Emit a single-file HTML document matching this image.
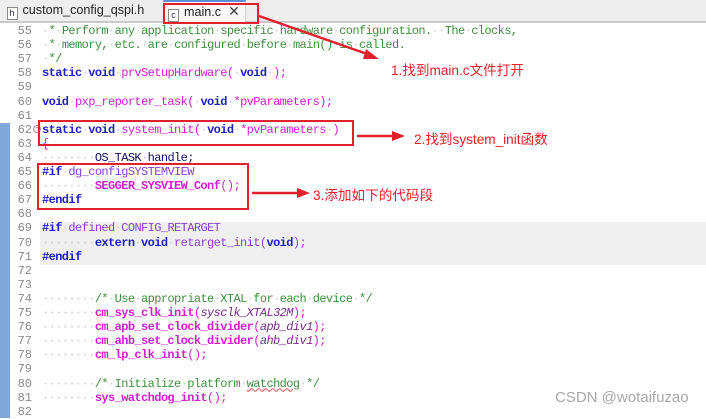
<!DOCTYPE html>
<html><head><meta charset="utf-8"><style>
*{margin:0;padding:0;box-sizing:border-box}
body{width:706px;height:418px;overflow:hidden;background:#fff;position:relative;font-family:"Liberation Mono",monospace;font-size:12px;letter-spacing:-0.6px}
.tabbar{position:absolute;left:0;top:0;width:706px;height:23px;background:#eeeeee;border-bottom:2px solid #c9c9c9}
.tab{position:absolute;top:0;height:21px;font-family:"Liberation Sans",sans-serif;font-size:12.6px;color:#222;line-height:21px;letter-spacing:0}
.ic{display:inline-block;width:11px;height:13px;border:1px solid #8a8a8a;background:#fff;font-size:9px;line-height:11px;text-align:center;vertical-align:-2px;margin-right:5px;color:#335;font-family:"Liberation Sans",sans-serif}
.gut{position:absolute;left:0;top:123px;width:10px;height:295px;background:#7fa7d8}
.ln{position:absolute;left:10px;width:22px;text-align:right;color:#8a8a8a;font-size:12px;height:14px;line-height:14px;letter-spacing:0}
.cd{position:absolute;left:42px;white-space:pre;height:14px;line-height:14px}
.d{color:#ccc}
.c{color:#3f8f3f}
.k{color:#2020c8;font-weight:bold}
.f{color:#d020d0}
.fb{color:#d020d0;font-weight:bold}
.p{color:#8a3fd0}
.b{color:#101060}
.box{position:absolute;border:2px solid #e0202a}
.lab{position:absolute;color:#e8202a;font-family:"Liberation Sans","Noto Sans CJK SC",sans-serif;font-size:13.6px;white-space:nowrap;letter-spacing:0}
</style></head><body>
<div class="tabbar"></div>
<div class="tab" style="left:3px;width:158px">&nbsp;<span class="ic">h</span>custom_config_qspi.h</div>
<div style="position:absolute;left:163px;top:0;width:83px;height:22px;background:#f7f7f7;border-top:2px solid #5b8fd6;border-right:1px solid #cfcfcf;border-left:1px solid #cfcfcf"></div>
<div class="tab" style="left:168px;top:1px"><span class="ic">c</span>main.c&nbsp;&nbsp;<span style="font-size:14px;color:#444">✕</span></div>
<div class="gut"></div>
<div style="position:absolute;left:40px;top:222px;width:666px;height:43px;background:#efefef"></div>
<div style="position:absolute;left:33px;top:125px;width:8px;height:8px;border:1px solid #999;border-radius:50%;font-size:7px;line-height:6px;text-align:center;color:#666;background:#eee">−</div>

<div id="code"></div>
<script>
var L=[
[55,'<span class="c"><span class="d">·</span>*<span class="d">·</span>Perform<span class="d">·</span>any<span class="d">·</span>application<span class="d">·</span>specific<span class="d">·</span>hardware<span class="d">·</span>configuration.<span class="d">··</span>The<span class="d">·</span>clocks,</span>'],
[56,'<span class="c"><span class="d">·</span>*<span class="d">·</span>memory,<span class="d">·</span>etc.<span class="d">·</span>are<span class="d">·</span>configured<span class="d">·</span>before<span class="d">·</span>main()<span class="d">·</span>is<span class="d">·</span>called.</span>'],
[57,'<span class="c"><span class="d">·</span>*/</span>'],
[58,'<span class="k">static</span><span class="d">·</span><span class="k">void</span><span class="d">·</span><span class="f">prvSetupHardware(</span><span class="d">·</span><span class="k">void</span><span class="d">·</span><span class="f">);</span>'],
[59,''],
[60,'<span class="k">void</span><span class="d">·</span><span class="f">pxp_reporter_task(</span><span class="d">·</span><span class="k">void</span><span class="d">·</span><span class="f">*pvParameters);</span>'],
[61,''],
[62,'<span class="k">static</span><span class="d">·</span><span class="k">void</span><span class="d">·</span><span class="f">system_init(</span><span class="d">·</span><span class="k">void</span><span class="d">·</span><span class="f">*pvParameters</span><span class="d">·</span><span class="f">)</span>'],
[63,'<span class="f">{</span>'],
[64,'<span class="d">········</span><span class="b">OS_TASK</span><span class="d">·</span><span class="b">handle;</span>'],
[65,'<span class="k">#if</span><span class="d">·</span><span class="p">dg_configSYSTEMVIEW</span>'],
[66,'<span class="d">········</span><span class="fb">SEGGER_SYSVIEW_Conf</span><span class="f">();</span>'],
[67,'<span class="k">#endif</span>'],
[68,''],
[69,'<span class="k">#if</span><span class="d">·</span><span class="p">defined</span><span class="d">·</span><span class="p">CONFIG_RETARGET</span>'],
[70,'<span class="d">········</span><span class="k">extern</span><span class="d">·</span><span class="k">void</span><span class="d">·</span><span class="p">retarget_init(</span><span class="k">void</span><span class="p">);</span>'],
[71,'<span class="k">#endif</span>'],
[72,''],[73,''],
[74,'<span class="d">········</span><span class="c">/*<span class="d">·</span>Use<span class="d">·</span>appropriate<span class="d">·</span>XTAL<span class="d">·</span>for<span class="d">·</span>each<span class="d">·</span>device<span class="d">·</span>*/</span>'],
[75,'<span class="d">········</span><span class="fb">cm_sys_clk_init</span><span class="f">(</span><i style="color:#7a2a8a">sysclk_XTAL32M</i><span class="f">);</span>'],
[76,'<span class="d">········</span><span class="fb">cm_apb_set_clock_divider</span><span class="f">(</span><i style="color:#7a2a8a">apb_div1</i><span class="f">);</span>'],
[77,'<span class="d">········</span><span class="fb">cm_ahb_set_clock_divider</span><span class="f">(</span><i style="color:#7a2a8a">ahb_div1</i><span class="f">);</span>'],
[78,'<span class="d">········</span><span class="fb">cm_lp_clk_init</span><span class="f">();</span>'],
[79,''],
[80,'<span class="d">········</span><span class="c">/*<span class="d">·</span>Initialize<span class="d">·</span>platform<span class="d">·</span><u style="text-decoration-color:#e07070;text-decoration-style:wavy">watchdog</u><span class="d">·</span>*/</span>'],
[81,'<span class="d">········</span><span class="fb">sys_watchdog_init</span><span class="f">();</span>'],
[82,'']];
var h='';
for(var i=0;i<L.length;i++){var t=24+i*14.1;
h+='<div class="ln" style="top:'+t+'px">'+L[i][0]+'</div><div class="cd" style="top:'+t+'px">'+L[i][1]+'</div>';}
document.getElementById('code').innerHTML=h;
</script>

<div class="box" style="left:163px;top:3px;width:96px;height:21px"></div>
<div class="box" style="left:38px;top:120px;width:316px;height:26px"></div>
<div class="box" style="left:37px;top:163px;width:212px;height:47px"></div>

<svg style="position:absolute;left:0;top:0" width="706" height="418">
<g stroke="#e0202a" stroke-width="2.5" fill="#e0202a">
<line x1="259" y1="16" x2="370" y2="55"/>
<polygon points="379,59 366,49 363,59" stroke="none"/>
<line x1="357" y1="136" x2="395" y2="136"/>
<polygon points="405,136 392,131 392,141" stroke="none"/>
<line x1="252" y1="193" x2="300" y2="193"/>
<polygon points="310,193 297,188 297,198" stroke="none"/>
</g></svg>
<div class="lab" style="left:391px;top:59px">1.找到main.c文件打开</div>
<div class="lab" style="left:414px;top:128px">2.找到system_init函数</div>
<div class="lab" style="left:313px;top:184px">3.添加如下的代码段</div>
<div style="position:absolute;left:555px;top:389px;font-family:'Liberation Sans',sans-serif;font-size:15px;color:#a8a8a8;letter-spacing:0">CSDN @wotaifuzao</div>
</body></html>
